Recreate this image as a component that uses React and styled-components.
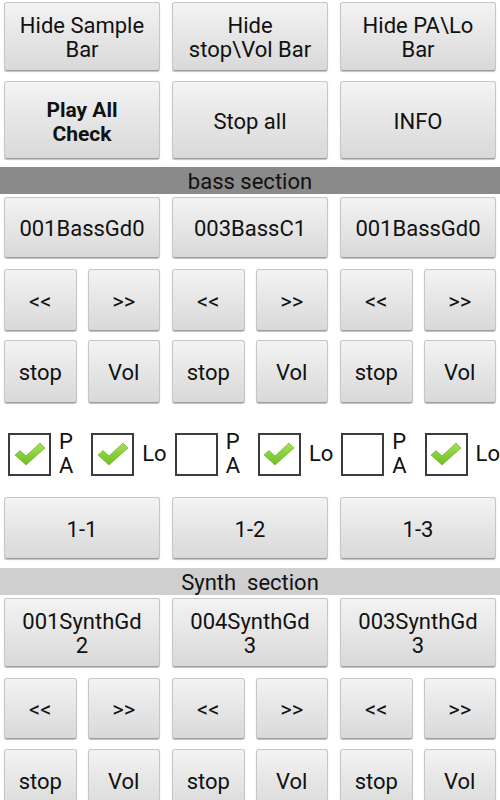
import React from "react";
import styled, { createGlobalStyle } from "styled-components";

const Global = createGlobalStyle`
  html, body { margin: 0; padding: 0; background: #fff; }
  body { font-family: Roboto, "Liberation Sans", sans-serif; overflow: hidden; }
`;

const Page = styled.div`
  width: 500px;
  height: 800px;
  overflow: hidden;
  display: flex;
  flex-direction: column;
`;

// 3칸짜리 한 줄
const Row = styled.div`
  display: grid;
  grid-template-columns: repeat(3, 1fr);
  column-gap: 12px;
  padding: 0 4px;
  margin-top: ${(p) => p.top || 0}px;
  height: ${(p) => p.h}px;
  flex-shrink: 0;
`;

// 한 칸 안에 작은 버튼 두 개
const Pair = styled.div`
  display: grid;
  grid-template-columns: 1fr 1fr;
  column-gap: 11px;
`;

const Btn = styled.button`
  margin: 0;
  padding: 3px 2px 0;
  height: 100%;
  background: linear-gradient(#f3f3f3, #e3e3e3 60%, #d9d9d9);
  border: 1px solid #c6c6c6;
  border-bottom-color: #9c9c9c;
  border-radius: 3px;
  box-shadow: 0 1px 1px rgba(0, 0, 0, 0.25);
  font-family: Roboto, "Liberation Sans", sans-serif;
  font-size: ${(p) => (p.bold ? "21px" : "22px")};
  font-weight: ${(p) => (p.bold ? 700 : 400)};
  line-height: 24px;
  color: #111;
  white-space: pre-line;
`;

const Bar = styled.div`
  margin-top: ${(p) => p.top}px;
  height: 27px;
  background: ${(p) => (p.dark ? "#8a8a8a" : "#cfcfcf")};
  color: #111;
  font-size: 22px;
  line-height: 29px;
  text-align: center;
  white-space: pre;
  flex-shrink: 0;
`;

const CheckRow = styled.div`
  display: grid;
  grid-template-columns: repeat(6, 1fr);
  height: 94px;
  padding-top: 8px;
  box-sizing: border-box;
  align-items: center;
  flex-shrink: 0;
`;

const CheckCell = styled.label`
  display: flex;
  align-items: center;
  gap: 8px;
  padding-left: 8px;
`;

const Box = styled.span`
  width: 39px;
  height: 39px;
  border: 2px solid #3c3c3c;
  background: #fff;
  display: flex;
  align-items: center;
  justify-content: center;
  flex-shrink: 0;
`;

const Lbl = styled.span`
  font-size: 22px;
  line-height: 24px;
  color: #111;
  white-space: pre-line;
`;

function Tick() {
  return (
    <svg width="34" height="26" viewBox="0 0 34 26">
      <defs>
        <linearGradient id="g" x1="0" y1="0" x2="0" y2="1">
          <stop offset="0" stopColor="#a8e05a" />
          <stop offset="1" stopColor="#6cc021" />
        </linearGradient>
      </defs>
      <path
        d="M2 14 L7 9.5 L13 15 L27 2 L32 7 L13 24 Z"
        fill="url(#g)"
        stroke="#5aa81a"
        strokeWidth="0.6"
        strokeLinejoin="round"
      />
    </svg>
  );
}

function Check({ on, label }) {
  return (
    <CheckCell>
      <Box>{on && <Tick />}</Box>
      <Lbl>{label}</Lbl>
    </CheckCell>
  );
}

function PairRow({ top, h, a, b }) {
  return (
    <Row top={top} h={h}>
      {[0, 1, 2].map((i) => (
        <Pair key={i}>
          <Btn>{a}</Btn>
          <Btn>{b}</Btn>
        </Pair>
      ))}
    </Row>
  );
}

export default function App() {
  return (
    <Page>
      <Global />
      <Row top={2} h={69}>
        <Btn>{"Hide Sample\nBar"}</Btn>
        <Btn>{"Hide\nstop\\Vol Bar"}</Btn>
        <Btn>{"Hide PA\\Lo\nBar"}</Btn>
      </Row>
      <Row top={10} h={78}>
        <Btn bold>{"Play All\nCheck"}</Btn>
        <Btn>Stop all</Btn>
        <Btn>INFO</Btn>
      </Row>
      <Bar dark top={8}>bass section</Bar>
      <Row top={3} h={61}>
        <Btn>001BassGd0</Btn>
        <Btn>003BassC1</Btn>
        <Btn>001BassGd0</Btn>
      </Row>
      <PairRow top={11} h={62} a="<<" b=">>" />
      <PairRow top={9} h={63} a="stop" b="Vol" />
      <CheckRow>
        <Check on label={"P\nA"} />
        <Check on label="Lo" />
        <Check label={"P\nA"} />
        <Check on label="Lo" />
        <Check label={"P\nA"} />
        <Check on label="Lo" />
      </CheckRow>
      <Row h={62}>
        <Btn>1-1</Btn>
        <Btn>1-2</Btn>
        <Btn>1-3</Btn>
      </Row>
      <Bar top={9}>{"Synth  section"}</Bar>
      <Row top={3} h={69}>
        <Btn>{"001SynthGd\n2"}</Btn>
        <Btn>{"004SynthGd\n3"}</Btn>
        <Btn>{"003SynthGd\n3"}</Btn>
      </Row>
      <PairRow top={11} h={61} a="<<" b=">>" />
      <PairRow top={10} h={63} a="stop" b="Vol" />
    </Page>
  );
}
